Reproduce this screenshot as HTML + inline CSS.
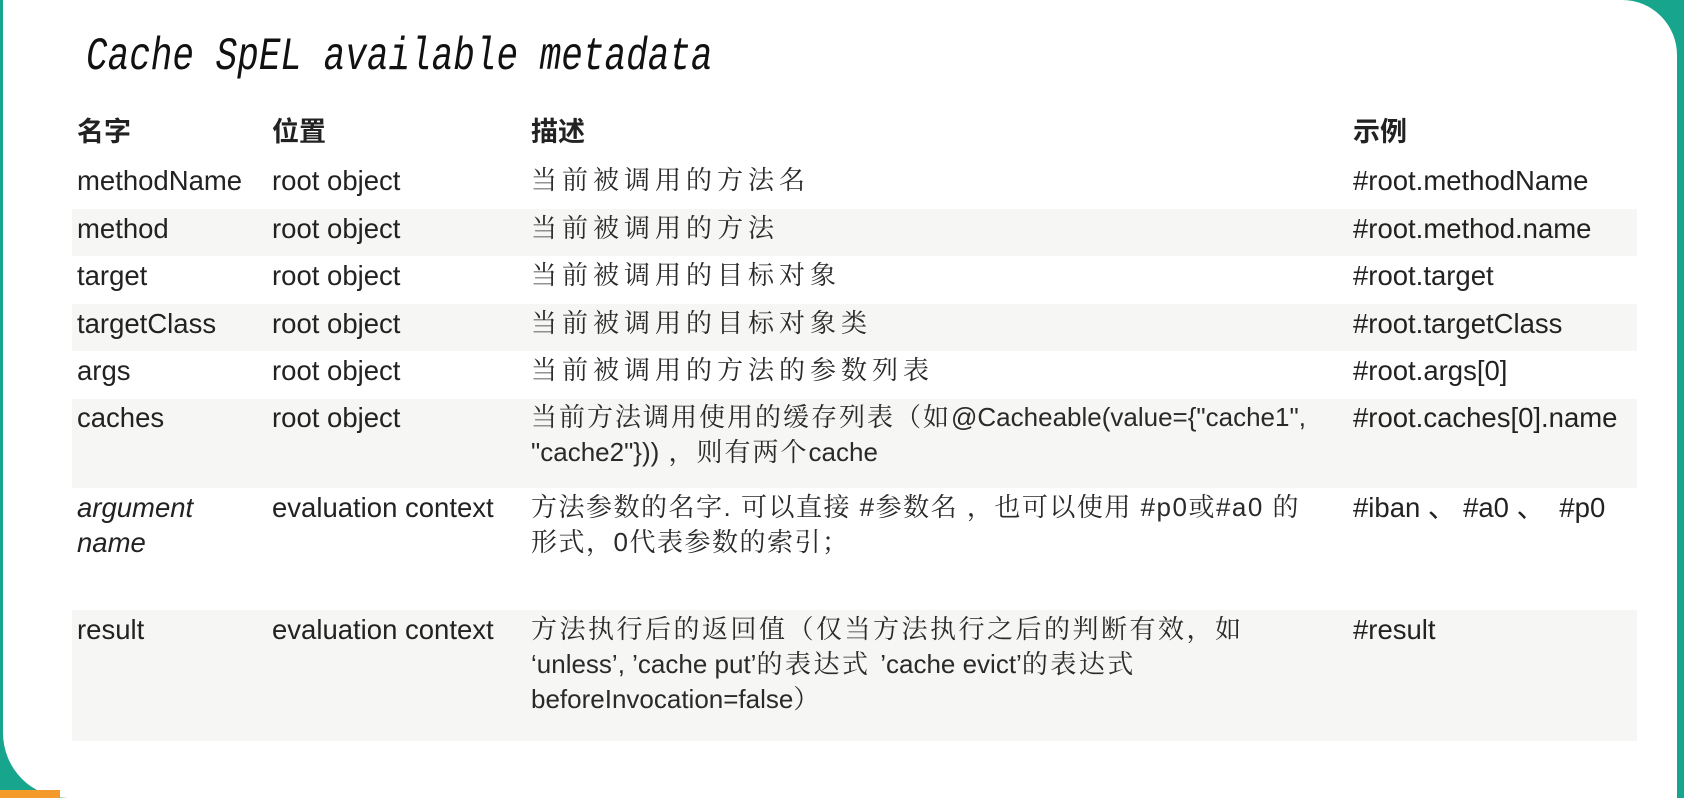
<!DOCTYPE html>
<html><head><meta charset="utf-8"><style>
*{margin:0;padding:0;box-sizing:border-box}
body{width:1684px;height:798px;overflow:hidden;background:#17a58e;position:relative;font-family:"Liberation Sans","Noto Sans CJK SC",sans-serif;color:#222}
.card{position:absolute;left:3px;top:0;width:1674px;height:798px;background:#fff;border-top-right-radius:55px;border-bottom-left-radius:65px}
.orange{position:absolute;left:0;top:790px;width:60px;height:8px;background:#f39a2a}
.title{position:absolute;left:86px;top:36px;font-family:"Liberation Mono",monospace;font-style:italic;font-size:36px;color:#111;white-space:nowrap;transform:scaleY(1.3);transform-origin:left center}
.stripe{position:absolute;left:72px;width:1565px;background:#f6f6f4}
.c{position:absolute;font-size:27.5px;white-space:nowrap;line-height:35px}
.h{font-weight:bold;font-size:27px}
.d{font-family:"Liberation Sans","Noto Serif CJK SC",serif;letter-spacing:5px;color:#2a2a2a;font-size:26px}
.d span{letter-spacing:0;font-size:26px}
</style></head><body>
<div class="card"></div>
<div class="orange"></div>
<div class="title">Cache SpEL available metadata</div>

<div class="stripe" style="top:209px;height:47px"></div>
<div class="stripe" style="top:304px;height:47px"></div>
<div class="stripe" style="top:399px;height:89px"></div>
<div class="stripe" style="top:610px;height:131px"></div>

<div class="c h" style="left:77px;top:115px">名字</div>
<div class="c h" style="left:272px;top:115px">位置</div>
<div class="c h" style="left:531px;top:115px">描述</div>
<div class="c h" style="left:1353px;top:115px">示例</div>

<div class="c" style="left:77px;top:163px">methodName</div>
<div class="c" style="left:272px;top:163px">root object</div>
<div class="c d" style="left:531px;top:163px">当前被调用的方法名</div>
<div class="c" style="left:1353px;top:163px">#root.methodName</div>

<div class="c" style="left:77px;top:211px">method</div>
<div class="c" style="left:272px;top:211px">root object</div>
<div class="c d" style="left:531px;top:211px">当前被调用的方法</div>
<div class="c" style="left:1353px;top:211px">#root.method.name</div>

<div class="c" style="left:77px;top:258px">target</div>
<div class="c" style="left:272px;top:258px">root object</div>
<div class="c d" style="left:531px;top:258px">当前被调用的目标对象</div>
<div class="c" style="left:1353px;top:258px">#root.target</div>

<div class="c" style="left:77px;top:306px">targetClass</div>
<div class="c" style="left:272px;top:306px">root object</div>
<div class="c d" style="left:531px;top:306px">当前被调用的目标对象类</div>
<div class="c" style="left:1353px;top:306px">#root.targetClass</div>

<div class="c" style="left:77px;top:353px">args</div>
<div class="c" style="left:272px;top:353px">root object</div>
<div class="c d" style="left:531px;top:353px">当前被调用的方法的参数列表</div>
<div class="c" style="left:1353px;top:353px">#root.args[0]</div>

<div class="c" style="left:77px;top:400px">caches</div>
<div class="c" style="left:272px;top:400px">root object</div>
<div class="c d" style="left:531px;top:400px;letter-spacing:2px">当前方法调用使用的缓存列表（如<span>@Cacheable(value={"cache1",</span><br><span>"cache2"}))</span> ，则有两个<span>cache</span></div>
<div class="c" style="left:1353px;top:400px">#root.caches[0].name</div>

<div class="c" style="left:77px;top:490px;font-style:italic">argument<br>name</div>
<div class="c" style="left:272px;top:490px">evaluation context</div>
<div class="c d" style="left:531px;top:490px;letter-spacing:1.5px">方法参数的名字. 可以直接 #参数名 ，也可以使用 #p0或#a0 的<br>形式，0代表参数的索引；</div>
<div class="c" style="left:1353px;top:490px">#iban 、 #a0 、&nbsp; #p0</div>

<div class="c" style="left:77px;top:612px">result</div>
<div class="c" style="left:272px;top:612px">evaluation context</div>
<div class="c d" style="left:531px;top:612px;letter-spacing:2.5px">方法执行后的返回值（仅当方法执行之后的判断有效，如<br><span>‘unless’,&nbsp;’cache put’</span>的表达式 <span>’cache evict’</span>的表达式<br><span>beforeInvocation=false</span>）</div>
<div class="c" style="left:1353px;top:612px">#result</div>
</body></html>
